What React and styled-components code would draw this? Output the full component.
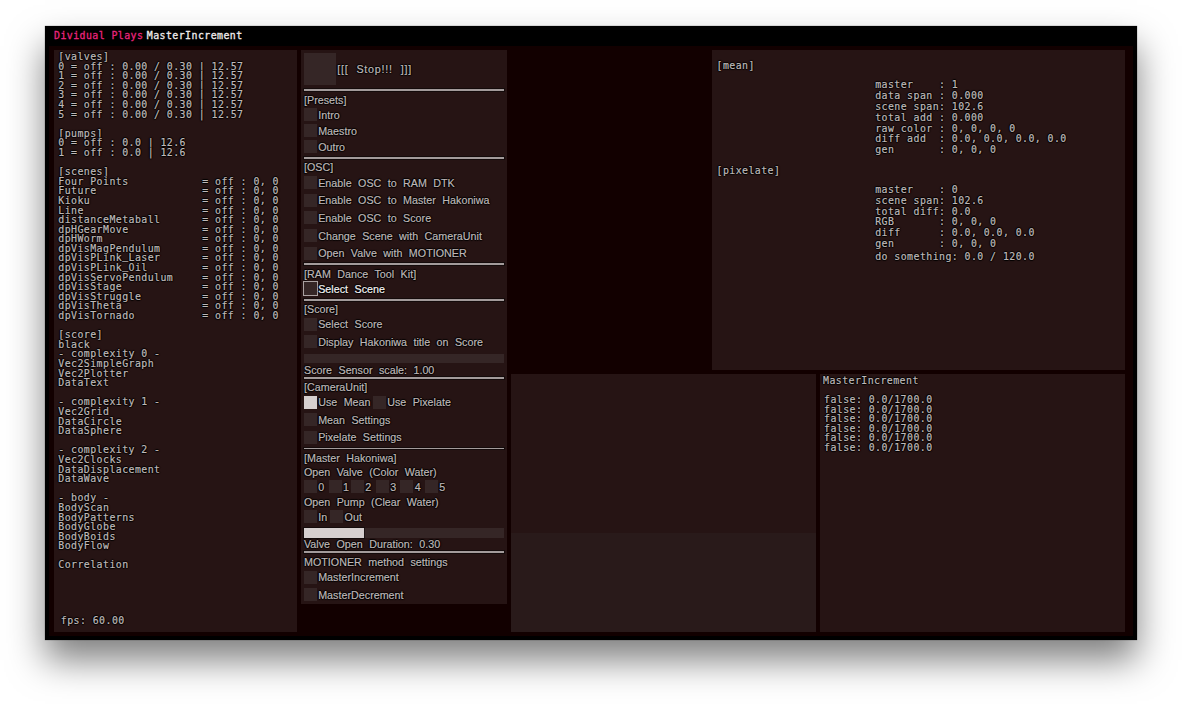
import React from "react";
import styled, { createGlobalStyle, css } from "styled-components";

const GlobalStyle = createGlobalStyle`
  * { box-sizing: border-box; }
  html, body { margin: 0; padding: 0; background: #fff; }
  body { width: 1182px; height: 704px; overflow: hidden; }
`;

const outline = css`
  text-shadow: 1px 0 1px #000, -1px 0 1px #000, 0 1px 1px #000, 0 -1px 1px #000;
`;

const Page = styled.main`
  width: 1182px;
  height: 704px;
  padding: 25.5px 45px 0;
  overflow: hidden;
`;

const Window = styled.div`
  width: 1092px;
  height: 614.5px;
  padding: 0 4px 4px;
  background: #000;
  box-shadow: 0 20px 34px rgba(0, 0, 0, 0.5), 0 0 1px rgba(0, 0, 0, 0.6);
  font-family: "DejaVu Sans Mono", monospace;
  font-size: 9.9px;
  letter-spacing: 0.44px;
  line-height: 9.6px;
  color: #bfb8b8;
  -webkit-text-stroke: 0.2px currentColor;
`;

const TitleBar = styled.header`
  display: flex;
  gap: 3.4px;
  height: 20.5px;
  padding: 5px 0 0 5px;
  color: #f0ecec;
  -webkit-text-stroke: 0.3px currentColor;
`;

const Brand = styled.span`
  color: #e8247c;
`;

const Workspace = styled.div`
  display: flex;
  gap: 4px;
  height: 590px;
  padding: 4px 8px 4px 5px;
  background: #120000;
`;

const Panel = styled.section`
  background: #261414;
  ${outline}
`;

const StatusPanel = styled(Panel)`
  display: flex;
  flex-direction: column;
  width: 243px;
  height: 582px;
  padding: 2px 0 6px 4.3px;
`;

const Line = styled.div`
  height: ${(p) => p.$h || 9.6}px;
  line-height: ${(p) => p.$h || 9.6}px;
  white-space: pre;
`;

const SceneLine = styled(Line)`
  display: grid;
  grid-template-columns: 144px auto;
`;

const Underscore = styled.span`
  line-height: 0;
  vertical-align: 2px;
`;

const Fps = styled(Line)`
  margin-top: auto;
  padding-left: 2.5px;
`;

const ControlPanel = styled(Panel)`
  width: 206px;
  height: 554px;
  padding: 3px 3px 0;
  font-family: "Liberation Sans", Arial, sans-serif;
  font-size: 10.7px;
  letter-spacing: 0.03px;
  word-spacing: 3.4px;
  color: #beb6b6;
`;

const Rule = styled.div`
  height: ${(p) => p.$h || 1.6}px;
  margin-top: ${(p) => p.$mt ?? 4}px;
  background: #a39b9b;
  box-shadow: 0 0 0 1px rgba(0, 0, 0, 0.45);
`;

const Caption = styled.div`
  height: ${(p) => p.$h || 17}px;
  line-height: ${(p) => p.$h || 17}px;
  padding-top: 0.7px;
  white-space: nowrap;
`;

const Toggles = styled.div`
  display: grid;
  grid-auto-rows: 13.2px;
  row-gap: ${(p) => p.$gap || 0}px;
`;

const ToggleRow = styled.div`
  display: grid;
  grid-template-columns: ${(p) => p.$cols};
  height: 13.2px;
`;

const Toggle = styled.div`
  display: flex;
  align-items: center;
  gap: 1.2px;
  height: ${(p) => (p.$big ? 32 : 13.2)}px;
  line-height: 13.2px;
  white-space: nowrap;
  color: ${(p) => (p.$focus ? "#f4f0f0" : "inherit")};
`;

const Label = styled.span`
  padding-top: 1.4px;
  letter-spacing: ${(p) => (p.$big ? 0.75 : 0.03)}px;
  word-spacing: ${(p) => (p.$big ? 4.4 : 3.4)}px;
`;

const Box = styled.span`
  flex: none;
  width: ${(p) => (p.$big ? 32 : 13)}px;
  height: ${(p) => (p.$big ? 32 : 13)}px;
  background: ${(p) => (p.$on ? "#d6cfcf" : "#352626")};
  outline: ${(p) => (p.$focus ? "1px solid #aaa1a1" : "none")};
  outline-offset: -0.5px;
`;

const Track = styled.div`
  height: 9.4px;
  margin-top: 5px;
  background: #352626;
`;

const Fill = styled.div`
  height: 100%;
  background: #d6cfcf;
  box-shadow: 0 0 0 1px rgba(0, 0, 0, 0.45);
`;

const Displays = styled.div`
  display: flex;
  flex-direction: column;
  align-items: flex-end;
  gap: 4px;
  width: 614px;
  height: 582px;
`;

const CameraPanel = styled(Panel)`
  width: 413px;
  height: 320px;
  padding: 11.4px 0 0 4.5px;
`;

const Readings = styled.div`
  margin: ${(p) => p.$m};
`;

const LowerRow = styled.div`
  display: flex;
  gap: 4px;
  width: 100%;
  height: 258px;
`;

const Monitor = styled(Panel)`
  display: flex;
  flex-direction: column;
  justify-content: flex-end;
  width: 305px;
`;

const MonitorFloor = styled.div`
  height: 99px;
  background: #291a1a;
`;

const IncrementPanel = styled(Panel)`
  width: 305px;
  padding: 1.8px 0 0 3px;
`;

const Counters = styled.div`
  margin-top: 9.6px;
  padding-left: 1px;
`;

const valves = [0, 1, 2, 3, 4, 5];
const scenes = [
  "Four Points", "Future", "Kioku", "Line", "distanceMetaball", "dpHGearMove",
  "dpHWorm", "dpVisMagPendulum", "dpVisPLink_Laser", "dpVisPLink_Oil",
  "dpVisServoPendulum", "dpVisStage", "dpVisStruggle", "dpVisTheta", "dpVisTornado",
];
const score = [
  "[score]", "black",
  "- complexity 0 -", "Vec2SimpleGraph", "Vec2Plotter", "DataText", "",
  "- complexity 1 -", "Vec2Grid", "DataCircle", "DataSphere", "",
  "- complexity 2 -", "Vec2Clocks", "DataDisplacement", "DataWave", "",
  "- body -", "BodyScan", "BodyPatterns", "BodyGlobe", "BodyBoids", "BodyFlow", "",
  "Correlation",
];
const mean = [
  "master    : 1",
  "data span : 0.000",
  "scene span: 102.6",
  "total add : 0.000",
  "raw color : 0, 0, 0, 0",
  "diff add  : 0.0, 0.0, 0.0, 0.0",
  "gen       : 0, 0, 0",
];
const pixelate = [
  "master    : 0",
  "scene span: 102.6",
  "total diff: 0.0",
  "RGB       : 0, 0, 0",
  "diff      : 0.0, 0.0, 0.0",
  "gen       : 0, 0, 0",
];

const SceneName = ({ name }) => {
  const [head, tail] = name.split("_");
  return <span>{head}{tail && <><Underscore>_</Underscore>{tail}</>}</span>;
};

const Check = ({ label, on, focus, big }) => (
  <Toggle $focus={focus} $big={big}>
    <Box $on={on} $focus={focus} $big={big} />
    <Label $big={big}>{label}</Label>
  </Toggle>
);

const CheckList = ({ items, gap = 4.4 }) => (
  <Toggles $gap={gap}>
    {items.map((label) => <Check key={label} label={label} />)}
  </Toggles>
);

const Slider = ({ value }) => (
  <Track>{value > 0 && <Fill style={{ width: `${value * 100}%` }} />}</Track>
);

function Status() {
  return (
    <StatusPanel>
      <Line>[valves]</Line>
      {valves.map((v) => <Line key={v}>{`${v} = off : 0.00 / 0.30 | 12.57`}</Line>)}
      <Line />
      <Line>[pumps]</Line>
      {[0, 1].map((v) => <Line key={v}>{`${v} = off : 0.0 | 12.6`}</Line>)}
      <Line />
      <Line>[scenes]</Line>
      {scenes.map((s) => (
        <SceneLine key={s}><SceneName name={s} /><span>= off : 0, 0</span></SceneLine>
      ))}
      <Line />
      {score.map((s, i) => <Line key={i}>{s}</Line>)}
      <Fps>fps: 60.00</Fps>
    </StatusPanel>
  );
}

function Controls() {
  return (
    <ControlPanel>
      <Check big label="[[[ Stop!!! ]]]" />
      <Rule $h={2} />
      <Caption>[Presets]</Caption>
      <CheckList gap={2.8} items={["Intro", "Maestro", "Outro"]} />
      <Rule />
      <Caption $h={17.4}>[OSC]</Caption>
      <CheckList
        items={[
          "Enable OSC to RAM DTK", "Enable OSC to Master Hakoniwa", "Enable OSC to Score",
          "Change Scene with CameraUnit", "Open Valve with MOTIONER",
        ]}
      />
      <Rule $mt={3.8} />
      <Caption>[RAM Dance Tool Kit]</Caption>
      <Check label="Select Scene" focus />
      <Rule $mt={3.8} />
      <Caption $h={17.2}>[Score]</Caption>
      <CheckList items={["Select Score", "Display Hakoniwa title on Score"]} />
      <Slider value={0} />
      <Caption $h={13}>Score Sensor scale: 1.00</Caption>
      <Rule $mt={1} />
      <Caption>[CameraUnit]</Caption>
      <ToggleRow $cols="69px auto">
        <Check label="Use Mean" on />
        <Check label="Use Pixelate" />
      </ToggleRow>
      <Caption $h={4.4} />
      <CheckList items={["Mean Settings", "Pixelate Settings"]} />
      <Rule $mt={3.8} />
      <Caption $h={17}>[Master Hakoniwa]</Caption>
      <Caption $h={10}>Open Valve (Color Water)</Caption>
      <Caption $h={3.6} />
      <ToggleRow $cols="24.7px 22.3px 25px 24.5px 24.5px auto">
        {valves.map((v) => <Check key={v} label={v} />)}
      </ToggleRow>
      <Caption>Open Pump (Clear Water)</Caption>
      <ToggleRow $cols="26.4px auto">
        <Check label="In" />
        <Check label="Out" />
      </ToggleRow>
      <Slider value={0.3} />
      <Caption $h={12.6}>Valve Open Duration: 0.30</Caption>
      <Rule $mt={1} />
      <Caption $h={17.6}>MOTIONER method settings</Caption>
      <CheckList items={["MasterIncrement", "MasterDecrement"]} />
    </ControlPanel>
  );
}

export default function App() {
  return (
    <>
      <GlobalStyle />
      <Page>
        <Window>
          <TitleBar>
            <Brand>Dividual Plays</Brand>
            <span>MasterIncrement</span>
          </TitleBar>
          <Workspace>
            <Status />
            <Controls />
            <Displays>
              <CameraPanel>
                <Line>[mean]</Line>
                <Readings $m="9px 0 0 158.7px">
                  {mean.map((t) => <Line $h={10.9} key={t}>{t}</Line>)}
                </Readings>
                <Readings $m="10px 0 0"><Line>[pixelate]</Line></Readings>
                <Readings $m="9px 0 0 158.7px">
                  {pixelate.map((t) => <Line $h={10.9} key={t}>{t}</Line>)}
                  <Line $h={14}>do something: 0.0 / 120.0</Line>
                </Readings>
              </CameraPanel>
              <LowerRow>
                <Monitor><MonitorFloor /></Monitor>
                <IncrementPanel>
                  <Line>MasterIncrement</Line>
                  <Counters>
                    {valves.map((v) => <Line key={v}>false: 0.0/1700.0</Line>)}
                  </Counters>
                </IncrementPanel>
              </LowerRow>
            </Displays>
          </Workspace>
        </Window>
      </Page>
    </>
  );
}
